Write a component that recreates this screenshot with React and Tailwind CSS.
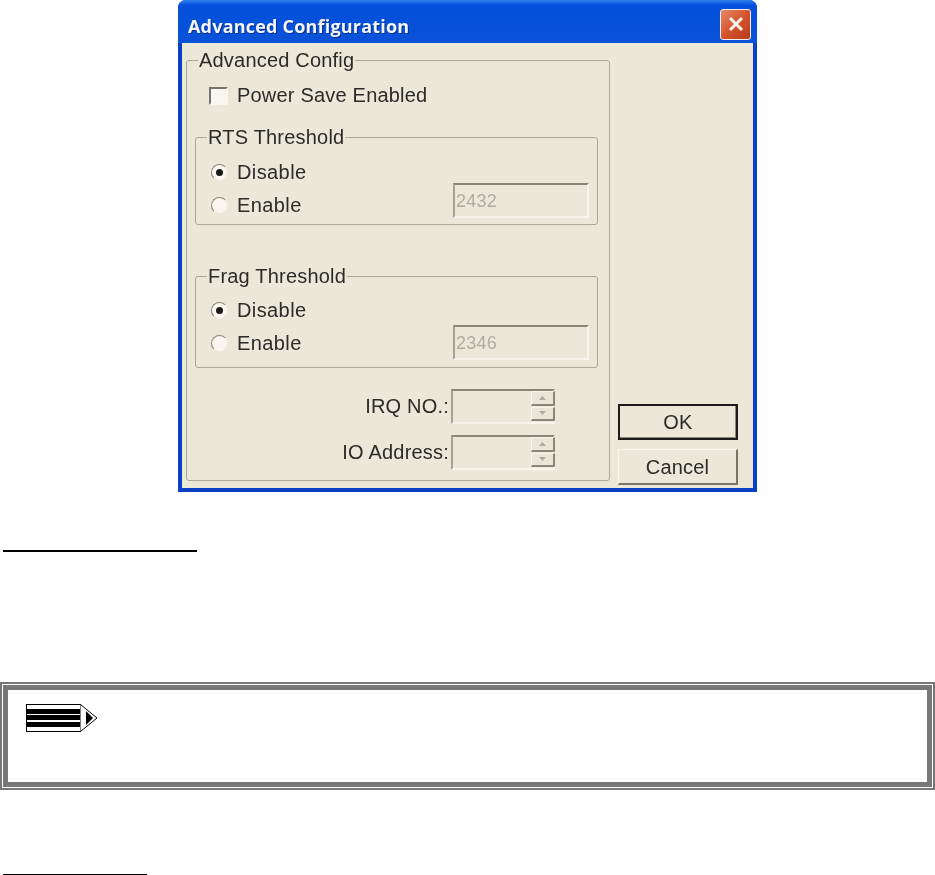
const sans = "font-['Liberation_Sans',Arial,sans-serif]";
const label = "text-[20px] tracking-[0.2px] text-[#2b2b28]";

function Legend({ children }) {
  return <legend className={`ml-[11px] px-[1px] leading-[22px] ${label}`}>{children}</legend>;
}

function Radio({ checked, text }) {
  return (
    <div className="flex items-center h-6">
      <span className="ml-[1px] w-[17px] h-[17px] rounded-full bg-[#f8f6ef] border border-[#ebe8da] border-t-[#8a8778] border-l-[#8a8778] flex items-center justify-center">
        {checked && <span className="w-[7px] h-[7px] rounded-full bg-[#1a1a18]" />}
      </span>
      <span className={`ml-[9px] tracking-[0.4px] ${label}`}>{text}</span>
    </div>
  );
}

function Threshold({ title, value, className, radioTop, inputTop, pad }) {
  return (
    <fieldset className={`ml-2 w-[403px] border border-[#a9a797] rounded-[3px] ${className}`}>
      <Legend>{title}</Legend>
      <div className={`flex justify-between pl-[14px] pr-2 ${pad}`}>
        <div className={`flex flex-col gap-[9px] ${radioTop}`}>
          <Radio checked text="Disable" />
          <Radio text="Enable" />
        </div>
        <div
          className={`w-[136px] h-[35px] ${inputTop} border-2 border-[#8a8778] border-l-[#a5a293] border-r-[#f7f5ee] border-b-[#f7f5ee] pt-[2px] pl-[1px] flex items-center text-[18px] tracking-[0.2px] text-[#aeaca0]`}
        >
          {value}
        </div>
      </div>
    </fieldset>
  );
}

function SpinButton({ up }) {
  return (
    <div className="flex-1 bg-[#e9e6d8] border border-[#f7f5ee] border-r-2 border-b-2 border-r-[#8a8778] border-b-[#8a8778] flex items-center justify-center">
      <svg width="7" height="4" viewBox="0 0 7 4">
        <path d={up ? "M3.5 0L7 4H0Z" : "M0 0H7L3.5 4Z"} fill="#aeaca0" />
      </svg>
    </div>
  );
}

function Spinner({ text, className = "" }) {
  return (
    <div className={`flex justify-end items-center gap-[2px] pr-[54px] ${className}`}>
      <span className={`pb-[2px] ${label}`}>{text}</span>
      <div className="w-[104px] h-[35px] border-2 border-[#8a8778] border-l-[#a5a293] border-r-[#f7f5ee] border-b-[#f7f5ee] flex justify-end">
        <div className="w-[24px] -mr-[2px] mb-[1px] flex flex-col gap-[1px]">
          <SpinButton up />
          <SpinButton />
        </div>
      </div>
    </div>
  );
}

function Pencil() {
  return (
    <svg width="72" height="29" viewBox="0 0 72 29" className="block">
      <rect x="0.5" y="0.5" width="54" height="27" fill="#fff" stroke="#000" />
      <rect x="1" y="5" width="53" height="5" fill="#000" />
      <rect x="1" y="11" width="53" height="5" fill="#000" />
      <rect x="1" y="18" width="53" height="5" fill="#000" />
      <path d="M54.5 0.5L71 14L54.5 27.5" fill="#fff" stroke="#000" />
      <path d="M60 7L67 14L60 21Z" fill="#000" />
    </svg>
  );
}

function Dialog() {
  return (
    <div className={`ml-[178px] w-[579px] h-[492px] shrink-0 flex flex-col rounded-t-[8px] overflow-hidden bg-[#0840c8] px-[4px] pb-[4px] blur-[0.4px] ${sans}`}>
      <div className="-mx-[4px] h-[43px] shrink-0 flex items-center justify-between pt-[5px] pl-[10px] pr-[6px] bg-gradient-to-b from-[#2f80ee] via-[#0350dc] via-[12%] to-[#0a52d8]">
        <span className="mt-1 font-['Open_Sans',sans-serif] font-bold text-[18px] tracking-[0.2px] text-[#f4f6fb] [text-shadow:1px_1px_0_#0a2f8f]">
          Advanced Configuration
        </span>
        <button className="w-[31px] h-[31px] rounded-[3px] border border-[#f4ece6] bg-gradient-to-br from-[#e58a68] via-[#d5532f] to-[#b93a18] flex items-center justify-center">
          <svg width="18" height="18" viewBox="0 0 18 18">
            <path d="M3 3L15 15M15 3L3 15" stroke="#f8f3ec" strokeWidth="3" />
          </svg>
        </button>
      </div>

      <div className="flex-1 flex bg-[#ebe8da] pl-1 pt-[6px] pb-[3px]">
        <fieldset className="w-[424px] mb-1 border border-[#a9a797] rounded-[3px]">
          <Legend>Advanced Config</Legend>
          <div className="flex items-center pl-[22px] mt-4 h-[18px]">
            <span className="w-[19px] h-[18px] bg-[#f8f6ef] border-2 border-[#77756a] border-r-[#f7f5ee] border-b-[#f7f5ee]" />
            <span className={`ml-[9px] pb-[2px] ${label}`}>Power Save Enabled</span>
          </div>
          <Threshold title="RTS Threshold" value="2432" className="mt-[21px]" radioTop="pt-3" inputTop="mt-[35px]" pad="pb-[6px]" />
          <Threshold title="Frag Threshold" value="2346" className="mt-10" radioTop="pt-[11px]" inputTop="mt-[38px]" pad="pb-[7px]" />
          <Spinner text="IRQ NO.:" className="mt-[21px]" />
          <Spinner text="IO Address:" className="mt-[11px]" />
        </fieldset>

        <div className="ml-2 w-[120px] flex flex-col justify-end gap-[9px]">
          <button className={`h-9 border-2 border-[#1c1c1a] bg-[#ebe8da] shadow-[inset_-1px_-1px_0_#8a8778] ${label}`}>
            OK
          </button>
          <button className={`h-9 bg-[#ebe8da] border border-[#f7f5ee] border-r-2 border-b-2 border-r-[#77756a] border-b-[#77756a] ${label}`}>
            Cancel
          </button>
        </div>
      </div>
    </div>
  );
}

function NoteBox() {
  return (
    <div className="mt-[130px] h-[108px] shrink-0 border-2 border-[#777] p-[1px]">
      <div className="h-full border-[5px] border-[#777] pl-[18px] pt-[14px]">
        <Pencil />
      </div>
    </div>
  );
}

export default function App() {
  return (
    <div className="w-[935px] h-[875px] overflow-hidden bg-white flex flex-col">
      <Dialog />
      <div className="mt-[58px] ml-[3px] w-[194px] h-[2px] shrink-0 bg-black" />
      <NoteBox />
      <div className="mt-[84px] ml-[3px] w-[144px] h-[2px] shrink-0 bg-black" />
    </div>
  );
}
